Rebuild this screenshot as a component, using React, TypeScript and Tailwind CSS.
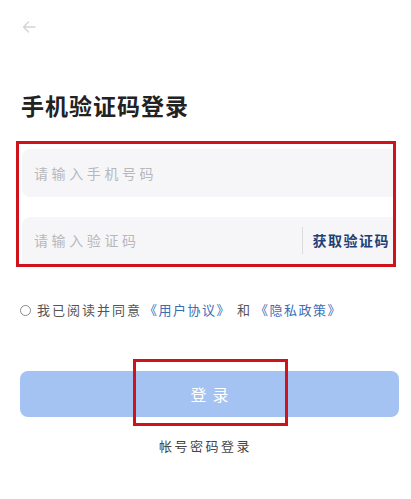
import React from "react";

const cjk = { fontFamily: '"Noto Sans CJK SC", "Noto Sans", sans-serif' };

export default function App() {
  return (
    <div className="w-[411px] h-[499px] bg-white relative overflow-hidden" style={cjk}>
      <div className="pl-[21px] pt-[19px] h-[17px] box-content">
        <svg width="16" height="16" viewBox="0 0 16 16" fill="none" stroke="#d4d4d4" strokeWidth="1.3" strokeLinecap="round" strokeLinejoin="round">
          <path d="M14 8H2.5M7.5 3L2.5 8l5 5" />
        </svg>
      </div>

      <h1 className="mt-[56px] ml-[21px] text-[23px] leading-[26px] font-bold tracking-[1px] text-[#222]">
        手机验证码登录
      </h1>

      <div className="mt-[23px] ml-[16px] w-[380px] border-[3px] border-[#d0121b] pl-[3px] pt-[5px] flex flex-col gap-[20px]">
        <div className="h-[48px] bg-[#f6f6f8] rounded-l-[8px] flex items-center pl-[12px]">
          <span className="text-[14px] tracking-[3.6px] text-[#b8b8bc]">请输入手机号码</span>
        </div>
        <div className="h-[47px] bg-[#f6f6f8] rounded-tl-[8px] flex items-center pl-[12px]">
          <span className="flex-1 text-[14px] tracking-[3.6px] text-[#b8b8bc]">请输入验证码</span>
          <div className="w-px h-[27px] bg-[#dcdcdc]" />
          <span className="pl-[10px] pr-[3px] text-[14px] font-bold tracking-[1.5px] text-[#1e3f78]">获取验证码</span>
        </div>
      </div>

      <div className="mt-[34px] ml-[20px] flex items-center text-[13px] tracking-[2px] leading-[18px]">
        <span className="w-[11px] h-[11px] rounded-full border-[1.5px] border-[#8a8a8a] mr-[6px]" />
        <span className="text-[#555]">我已阅读并同意</span>
        <span className="ml-[2px] tracking-[1.5px] text-[#3a6db5]">《用户协议》</span>
        <span className="ml-[6px] text-[#555]">和</span>
        <span className="ml-[3px] tracking-[1.5px] text-[#3a6db5]">《隐私政策》</span>
      </div>

      <div className="relative mt-[52px] mx-[20px]">
        <button className="w-[379px] h-[46px] rounded-[8px] bg-[#a4c3f2] text-white text-[16px] tracking-[6px] pl-[6px]">
          登录
        </button>
        <div className="absolute left-[113px] top-[-12px] w-[155px] h-[67px] border-[3px] border-[#d0121b] pointer-events-none" />
      </div>

      <div className="mt-[19px] text-center text-[13px] tracking-[2.5px] text-[#444]">帐号密码登录</div>
    </div>
  );
}
